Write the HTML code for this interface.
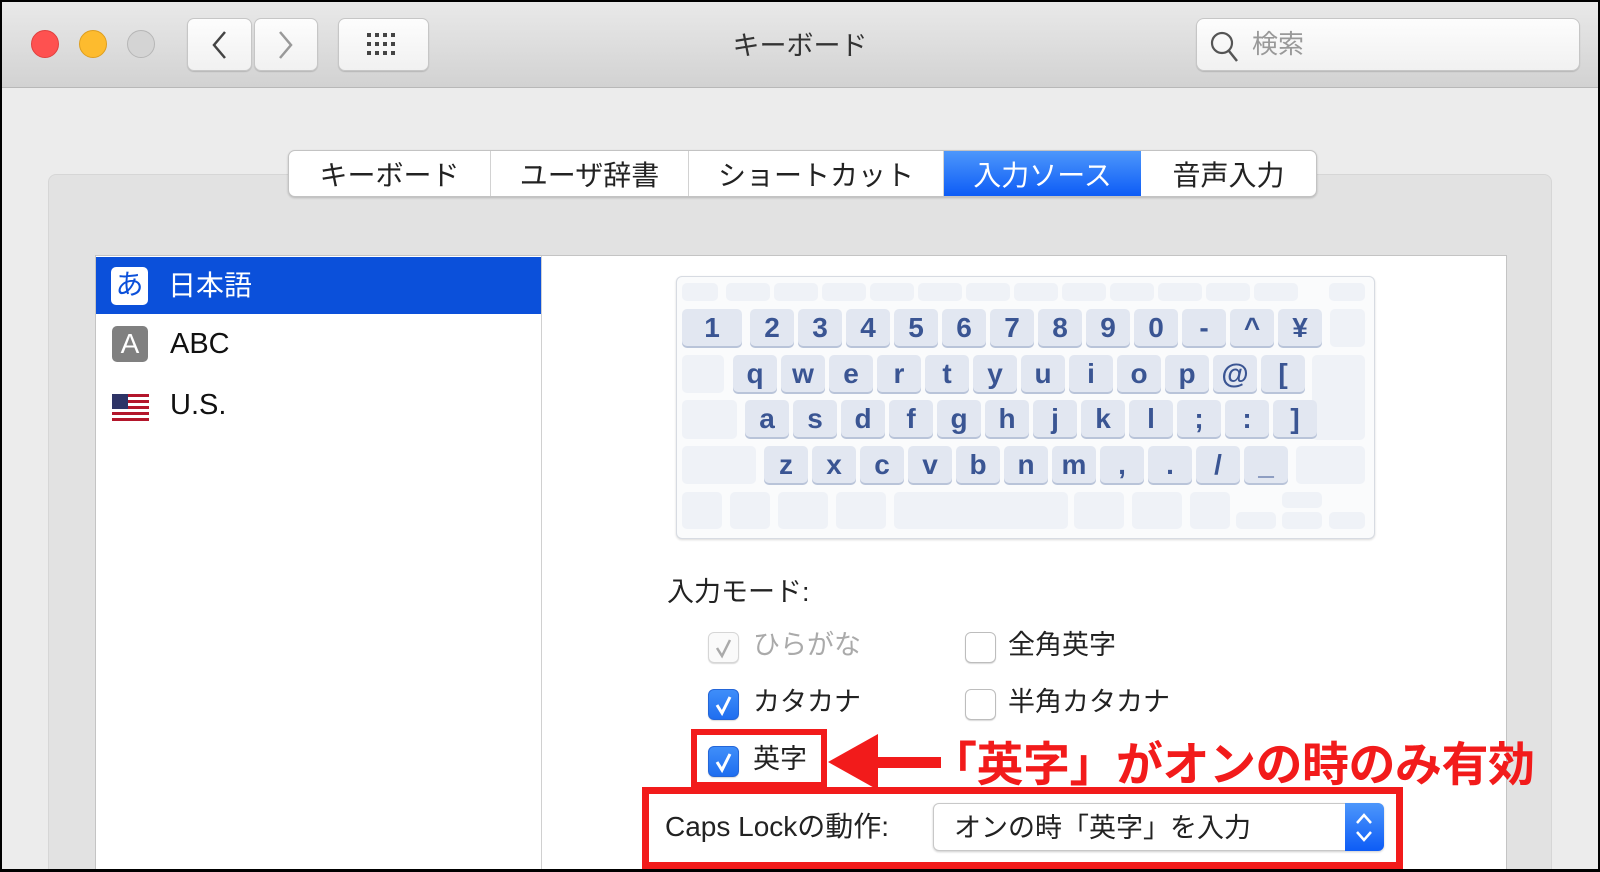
<!DOCTYPE html>
<html><head><meta charset="utf-8"><style>
*{margin:0;padding:0;box-sizing:border-box}
body{width:1600px;height:872px;overflow:hidden;background:#000;font-family:"Liberation Sans","Noto Sans CJK JP",sans-serif;position:relative}
.win{position:absolute;left:2px;top:2px;width:1596px;height:867px;background:#ececec;overflow:hidden}
.a{position:absolute}
.tb{left:0;top:0;width:1596px;height:86px;background:linear-gradient(#e9e9e9,#d2d2d2);border-bottom:1px solid #b8b8b8}
.tl{width:28px;height:28px;border-radius:50%;top:28px}
.btn{background:linear-gradient(#fdfdfd,#f1f1f1);border:1px solid #c6c6c6;border-radius:7px;box-shadow:0 1px 1px rgba(0,0,0,.15)}
.tabs{left:286px;top:148px;height:47px;display:flex;border:1px solid #c3c3c3;border-radius:7px;background:#fff;overflow:hidden;box-shadow:0 1px 2px rgba(0,0,0,.2)}
.tabs div{height:100%;display:flex;align-items:center;justify-content:center;font-size:28px;color:#222;border-right:1px solid #d2d2d2}
.k{position:absolute;background:#e2e7f1;border-radius:5px;box-shadow:0 2px 0 #b9c4d9;color:#3a5593;font-weight:bold;font-size:28px;display:flex;align-items:center;justify-content:center;height:37px;width:44px}
.f{position:absolute;background:#eff2f7;border-radius:5px}
.cb{position:absolute;width:31px;height:31px;border-radius:6px;border:1px solid #bdbdbd;background:#fff;box-shadow:0 1px 1px rgba(0,0,0,.15)}
.cb.on{background:linear-gradient(#3f8ef9,#1f6ef0);border-color:#2466d8}
.lbl{position:absolute;font-size:27px;color:#222;line-height:31px}
</style></head><body>
<div class="win">
<div class="a tb"></div>
<div class="a tl" style="left:29px;background:#fe5150;border:1px solid #e0403e"></div>
<div class="a tl" style="left:77px;background:#fdbb2e;border:1px solid #de9e1f"></div>
<div class="a tl" style="left:125px;background:#d4d4d4;border:1px solid #b6b6b6"></div>
<div class="a btn" style="left:185px;top:16px;width:65px;height:53px"></div>
<div class="a btn" style="left:252px;top:16px;width:64px;height:53px"></div>
<svg class="a" style="left:185px;top:16px" width="131" height="53"><path d="M38 14 L27 27 L38 40" stroke="#444" stroke-width="2.5" fill="none"/><path d="M93 14 L104 27 L93 40" stroke="#999" stroke-width="2.5" fill="none"/></svg>
<div class="a btn" style="left:336px;top:16px;width:91px;height:53px"></div>
<svg class="a" style="left:336px;top:16px" width="91" height="53"><g fill="#444"><rect x="29" y="15" width="4" height="4"/><rect x="37" y="15" width="4" height="4"/><rect x="45" y="15" width="4" height="4"/><rect x="53" y="15" width="4" height="4"/><rect x="29" y="24" width="4" height="4"/><rect x="37" y="24" width="4" height="4"/><rect x="45" y="24" width="4" height="4"/><rect x="53" y="24" width="4" height="4"/><rect x="29" y="33" width="4" height="4"/><rect x="37" y="33" width="4" height="4"/><rect x="45" y="33" width="4" height="4"/><rect x="53" y="33" width="4" height="4"/></g></svg>
<div class="a" style="left:0;width:1596px;top:22px;text-align:center;font-size:27px;color:#333">キーボード</div>
<div class="a btn" style="left:1194px;top:16px;width:384px;height:53px;border-radius:8px"></div>
<svg class="a" style="left:1206px;top:26px" width="34" height="36"><circle cx="14" cy="15" r="10" stroke="#555" stroke-width="2.2" fill="none"/><path d="M21 23 L29 33" stroke="#555" stroke-width="2.5"/></svg>
<div class="a" style="left:1250px;top:22px;font-size:26px;color:#999">検索</div>

<div class="a" style="left:46px;top:172px;width:1504px;height:720px;background:#e2e2e2;border:1px solid #d6d6d6;border-radius:8px"></div>
<div class="a tabs"><div style="width:202px">キーボード</div><div style="width:198px">ユーザ辞書</div><div style="width:255px">ショートカット</div><div style="width:197px;background:linear-gradient(#4d97fb,#0d5cf6);color:#fff;border-right:none">入力ソース</div><div style="width:175px;border-right:none">音声入力</div></div>

<div class="a" style="left:93px;top:253px;width:1412px;height:640px;background:#fff;border:1px solid #c4c4c4"></div>
<div class="a" style="left:539px;top:254px;width:1px;height:640px;background:#d0d0d0"></div>
<div class="a" style="left:94px;top:255px;width:445px;height:57px;background:#0b50da"></div>
<div class="a" style="left:109px;top:265px;width:37px;height:38px;background:#fff;border-radius:5px;color:#0b50da;font-size:28px;text-align:center;line-height:36px">あ</div>
<div class="a" style="left:166px;top:262px;font-size:28px;color:#fff">日本語</div>
<div class="a" style="left:110px;top:324px;width:36px;height:36px;background:#808080;border-radius:5px;color:#fff;font-size:28px;text-align:center;line-height:36px">A</div>
<div class="a" style="left:168px;top:326px;font-size:29px;color:#111">ABC</div>
<svg class="a" style="left:110px;top:392px" width="37" height="27"><g fill="#b3162b"><rect y="0" width="37" height="3"/><rect y="6" width="37" height="3"/><rect y="12" width="37" height="3"/><rect y="18" width="37" height="3"/><rect y="24" width="37" height="3"/></g><rect width="16" height="15" fill="#2e3466"/></svg>
<div class="a" style="left:168px;top:387px;font-size:29px;color:#111">U.S.</div>

<div class="a" style="left:674px;top:274px;width:699px;height:263px;background:#fafbfc;border:1px solid #d7dbe2;border-radius:6px;box-shadow:0 1px 2px rgba(0,0,0,.15)"></div>
<div id="kb"></div>

<div class="a" style="left:665px;top:568px;font-size:27px;color:#222">入力モード:</div>
<div class="cb" style="left:706px;top:630px;background:#fafafa;border-color:#d6d6d6"></div>
<svg class="a" style="left:706px;top:630px" width="31" height="31"><path d="M9 16 L14 24 L22 8" stroke="#aaa" stroke-width="2.5" fill="none"/></svg>
<div class="lbl" style="left:751px;top:628px;color:#aaa">ひらがな</div>
<div class="cb" style="left:963px;top:630px"></div>
<div class="lbl" style="left:1006px;top:628px">全角英字</div>
<div class="cb on" style="left:706px;top:687px"></div>
<svg class="a" style="left:706px;top:687px" width="31" height="31"><path d="M9 16 L14 24 L22 8" stroke="#fff" stroke-width="3" fill="none"/></svg>
<div class="lbl" style="left:751px;top:685px">カタカナ</div>
<div class="cb" style="left:963px;top:687px"></div>
<div class="lbl" style="left:1006px;top:685px">半角カタカナ</div>
<div class="cb on" style="left:706px;top:744px"></div>
<svg class="a" style="left:706px;top:744px" width="31" height="31"><path d="M9 16 L14 24 L22 8" stroke="#fff" stroke-width="3" fill="none"/></svg>
<div class="lbl" style="left:751px;top:742px">英字</div>

<div class="a" style="left:689px;top:727px;width:136px;height:59px;border:6px solid #f21b1b"></div>
<svg class="a" style="left:824px;top:728px" width="115" height="66"><polygon points="2,32 52,4 52,60" fill="#f21b1b"/><rect x="50" y="27" width="65" height="11" fill="#f21b1b"/></svg>
<div class="a" style="left:928px;top:724px;font-size:47px;font-weight:bold;color:#f21b1b;letter-spacing:-0.5px;white-space:nowrap">「英字」がオンの時のみ有効</div>

<div class="a" style="left:640px;top:785px;width:761px;height:82px;border:7px solid #f21b1b"></div>
<div class="a" style="left:663px;top:803px;font-size:28px;color:#222">Caps Lockの動作:</div>
<div class="a" style="left:931px;top:801px;width:451px;height:48px;background:#fff;border:1px solid #c8c8c8;border-radius:6px;box-shadow:0 1px 2px rgba(0,0,0,.2)"></div>
<div class="a" style="left:1343px;top:801px;width:39px;height:48px;background:linear-gradient(#4d97fb,#0d5cf6);border-radius:0 6px 6px 0"></div>
<svg class="a" style="left:1343px;top:801px" width="39" height="48"><path d="M12 20 L19 12 L26 20 M12 29 L19 37 L26 29" stroke="#fff" stroke-width="2.5" fill="none"/></svg>
<div class="a" style="left:952px;top:804px;font-size:27px;color:#222">オンの時「英字」を入力</div>
</div>
<script>
var kb=document.getElementById('kb'),h='';
function f(x,y,w,hh){h+='<div class="f" style="left:'+(x-2)+'px;top:'+(y-2)+'px;width:'+w+'px;height:'+hh+'px"></div>'}
function k(x,y,t,w){h+='<div class="k" style="left:'+(x-2)+'px;top:'+(y-2)+'px;'+(w?'width:'+w+'px;':'')+'">'+t+'</div>'}
f(682,283,36,18);for(var i=0;i<12;i++)f(726+i*48,283,44,18);f(1329,283,36,18);
k(682,309,'1',60);'234567890-^¥'.split('').forEach(function(c,i){k(750+i*48,309,c)});f(1330,309,35,38);
f(682,355,42,38);'qwerty'.split('').concat('uiop@['.split('')).forEach(function(c,i){k(733+i*48,355,c)});f(1312,355,53,85);
f(682,400,55,39);'asdfghjkl;:]'.split('').forEach(function(c,i){k(745+i*48,400,c)});
f(682,446,74,38);'zxcvbnm,./_'.split('').forEach(function(c,i){k(764+i*48,446,c)});f(1296,446,69,38);
[[682,40],[730,40],[778,50],[836,50],[894,174],[1074,50],[1132,50],[1190,40]].forEach(function(a){f(a[0],492,a[1],37)});
f(1282,492,40,16);f(1236,512,40,17);f(1282,512,40,17);f(1329,512,36,17);
kb.innerHTML=h;
</script>
</body></html>
